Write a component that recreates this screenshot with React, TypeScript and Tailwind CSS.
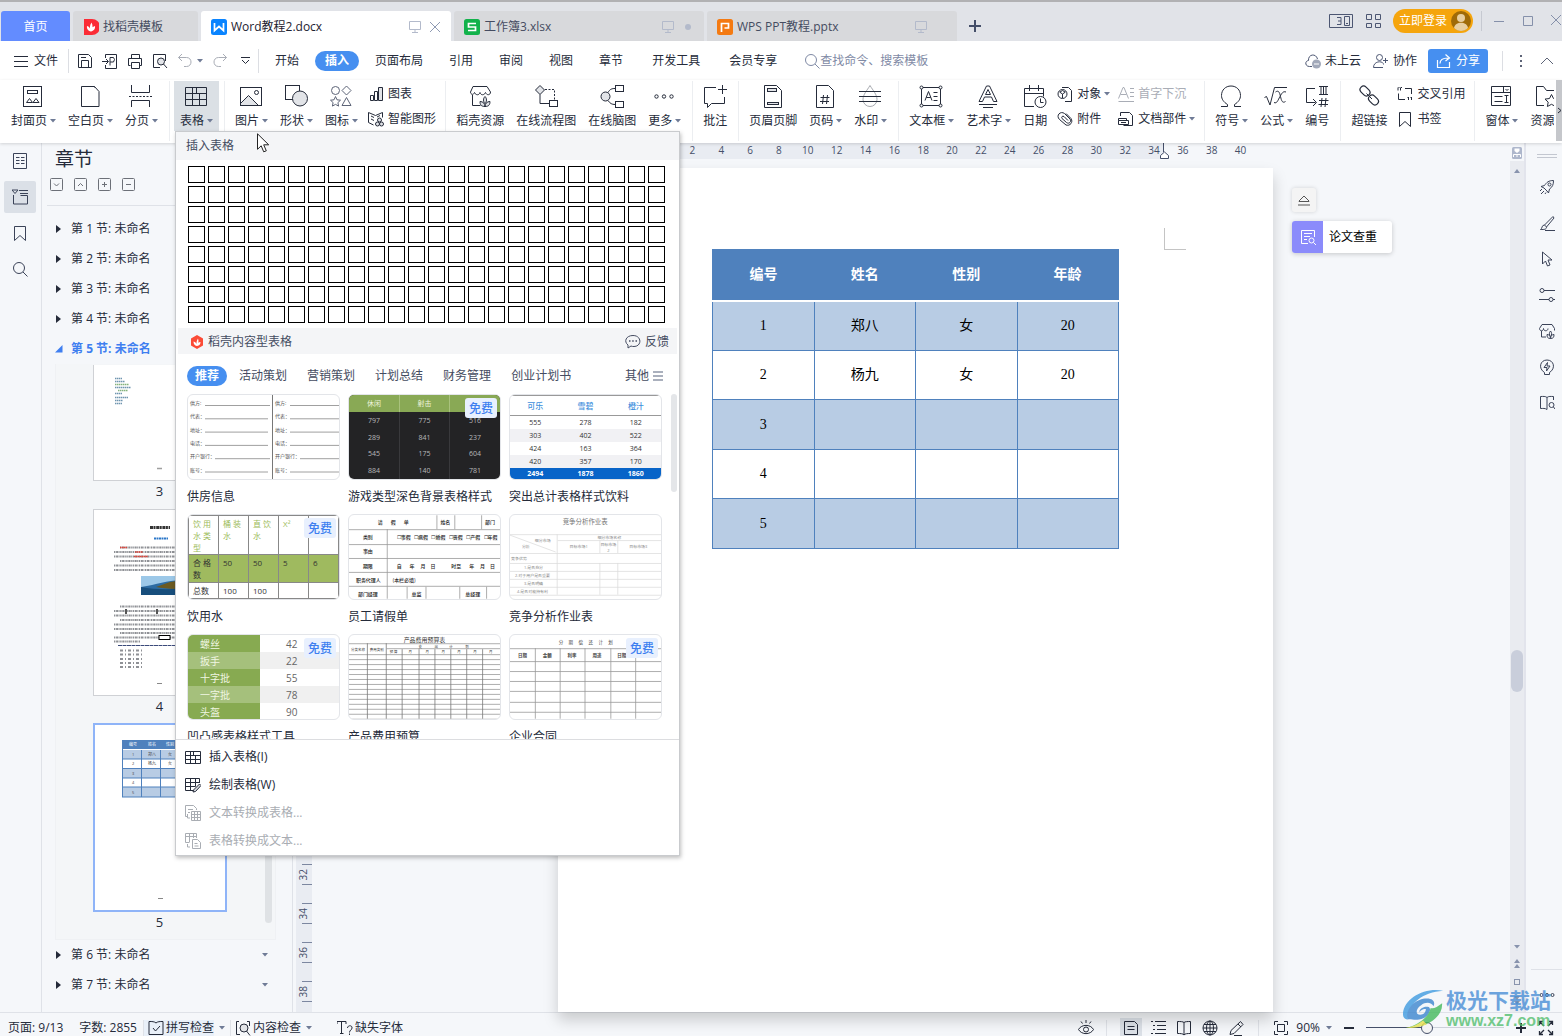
import React from "react";

type Kids = { children?: React.ReactNode };

function Svg({ s = 16, w, h, c = "", sw = 1, children }: Kids & { s?: number; w?: number; h?: number; c?: string; sw?: number }) {
  const W = w ?? s;
  const H = h ?? s;
  return (
    <svg width={W} height={H} viewBox={`0 0 ${W} ${H}`} fill="none" stroke="currentColor" strokeWidth={sw} className={`shrink-0 ${c}`} aria-hidden="true">
      {children}
    </svg>
  );
}

const Caret = ({ c = "text-[#6f7b96]" }: { c?: string }) => (
  <Svg w={6} h={4} c={c}>
    <path d="M0 0h6L3 3.5z" fill="currentColor" stroke="none" />
  </Svg>
);

/* ---------- ribbon icons, 24 x 24 ---------- */
const big: Record<string, React.ReactNode> = {
  cover: <><rect x="2.5" y="2.5" width="18" height="20" /><rect x="6.5" y="6.5" width="10" height="3" /><path d="M5.5 18.500l3-4 3 4zM12 18.500l3-4 3 4z" /></>,
  blank: <path d="M3.500 2.500h13l4.500 5v15H3.500zM16.500 2.500v1" />,
  brk: <><path d="M2.500 1v7.500h18V1M2.500 23v-6.500h18V23" /><path d="M0 12.500h23" strokeDasharray="2 1.500" /></>,
  table: <path d="M1.500 3.500h21v18h-21zM1.500 9.500h21M1.500 15.500h21M8.500 3.500v18M15.500 9.500v12M12.500 3.500v6" />,
  picture: <><path d="M1.500 19.500l8-8 10 10H1.500z" fill="#e2e4e8" /><rect x="1.500" y="3.500" width="21" height="18" /><circle cx="17.500" cy="8.500" r="2" /></>,
  shape: <><rect x="1.500" y="1.500" width="14" height="14" /><circle cx="16" cy="14.500" r="7.500" fill="#e2e4e8" /></>,
  glyphs: <g stroke="#5d6477"><circle cx="6.500" cy="6.500" r="4" /><path d="M17.500 2l4.500 4.500-4.500 4.500L13 6.500zM6.500 12.500l1.500 3.300 3.500.4-2.600 2.400.7 3.500-3.100-1.700-3.100 1.700.7-3.500L1.500 16.200l3.500-.4zM17.500 13.500l4.500 8h-9z" /></g>,
  shop: <><path d="M4.500 11v10.500h8M5 2.500h14l3.500 5.500c0 3.500-4 3.500-5 .5-1.500 3-4.500 3-5.500 0-1 3-4 3-5.500 0-1 3-4 2-4-.5z" /><path d="M17 22.500c-4 0-5-2-5-5 3 0 5 2 5 5zm0 0c4 0 5-2 5-5-3 0-5 2-5 5zm0-3c-2-2-2-5 0-7 2 2 2 5 0 7z" fill="#e2e4e8" /></>,
  flow: <><path d="M6 1.500l4.500 4.500L6 10.500 1.500 6z" fill="#e2e4e8" /><path d="M6 10.500v9h9" /><path d="M11 5.500h9.500v11" strokeDasharray="2 1.500" /><rect x="15.500" y="16.500" width="8" height="6" /></>,
  mind: <><circle cx="5.500" cy="12.500" r="4.500" fill="#e2e4e8" /><path d="M8 8.500c2-3.500 4-4 7-4M8 16.500c2 3 4 4 7 4" /><rect x="15.500" y="1.500" width="8" height="6" /><rect x="15.500" y="17.500" width="8" height="6" /></>,
  more: <><circle cx="4.500" cy="12.500" r="1.700" /><circle cx="12" cy="12.500" r="1.700" /><circle cx="19.500" cy="12.500" r="1.700" /></>,
  comment: <path d="M13 3.500H1.500v16h3v4l4-4h13V13M19.500 1v9M15 5.500h9" />,
  header: <><path d="M3.500 1.500h12l5 5v17h-17z" /><rect x="6.500" y="4.500" width="9" height="3" fill="#e2e4e8" /><rect x="6.500" y="18.500" width="11" height="2" fill="#e2e4e8" /></>,
  pageno: <path d="M3.500 1.500h12l5 5v17h-17zM10.500 11l-1 9M14.500 11l-1 9M7.500 13.500h9M7 17.500h9" />,
  water: <><path d="M12 1.500c3 5 7 9 7 14a7 7 0 01-14 0c0-5 4-9 7-14z" stroke="#a5a8ae" /><path d="M1 7.500h22M1 12.500h22M1 17.500h22" /></>,
  textbox: <><rect x="2.500" y="3.500" width="19" height="18" /><path d="M6 16.500l3.500-9 3.500 9M7.300 13.500h4.400M14.500 8.500h4M14.500 12.500h4M14.500 16.500h4" /><g fill="#fff"><circle cx="2.500" cy="3.500" r="1.500" /><circle cx="21.500" cy="3.500" r="1.500" /><circle cx="2.500" cy="21.500" r="1.500" /><circle cx="21.500" cy="21.500" r="1.500" /></g></>,
  art: <><path d="M3 17.500L10.500 2h3L21 17.500h-3.500l-2-4.500h-7l-2 4.500zM9.500 10.500h5L12 5.500zM3 20.500h18M7 23.500h10" /></>,
  date: <><path d="M11 22.500H1.500v-18h19v8M1.500 9.500h19M6.500 1v6M15.500 1v6" /><circle cx="17.500" cy="18" r="5.500" fill="#fff" /><path d="M17.500 14.500v4h3" /></>,
  omega: <path d="M2 22.500h6.500v-2C4.500 18 2.500 15 2.500 11.500 2.500 6 6.500 2 12 2s9.500 4 9.500 9.500c0 3.500-2 6.500-6 9v2H22" />,
  formula: <path d="M.5 13.500l2-1 3.500 8.500L10.500 3.500H23M11.500 8c3-2 4 0 5 4.500s2 7 5 5M22 8c-3-1-4 1-6 4.500S13 20 10 18.500" />,
  number: <path d="M10 4.500H1.500v14h9M8 15l3.500 3.500L8 22M14 2.500h9M14 10.500h9M16 2.500v8M18.500 2.500v8M21 2.500v8M17 14l-1 9M21 14l-1 9M14 16.500h9.500M13.500 20.500H23" />,
  link: <><rect x="2.500" y="3.500" width="11" height="7" rx="3.500" transform="rotate(45 8 7)" strokeWidth="1.200" /><rect x="11" y="12.500" width="11" height="7" rx="3.500" transform="rotate(45 16.500 16)" strokeWidth="1.200" /><path d="M9.500 9.500l5.500 5.500" /></>,
  form: <path d="M2.500 2.500h19v19h-19zM2.500 8.500h19M14.500 2.500v6M16.500 5l1.500 1.500L19.500 5M5.500 12.500h8M5.500 17.500h8M17.500 11v8M15.500 11.500h4M15.500 18.500h4" />,
  res: <path d="M10 21.500H2.500v-19h7l3 4h9v4M17.500 10.500l2 4 4.500.6-3.200 3 .8 4.400-4.100-2.200-4.100 2.200.8-4.400-3.200-3 4.500-.6z" />,
};

/* ---------- small icons, 16 x 16 ---------- */
const sm: Record<string, React.ReactNode> = {
  chart: <><path d="M2.500 9.500h3v5h-3zM6.500 5.500h3v9h-3z" /><path d="M10.500 1.500h4v13h-4z" fill="#e2e4e8" /></>,
  smart: <><path d="M.5 1.500l7 3 7-3v5M.5 1.500v10l5 2.500M3 5l3 1.500M3 8l3 1.500M12 4.500L9 6" /><circle cx="11.500" cy="9" r="2" fill="#e2e4e8" /><circle cx="9.500" cy="13" r="2" fill="#e2e4e8" /><circle cx="13.500" cy="13" r="2" fill="#e2e4e8" /></>,
  object: <><path d="M5 1.500h6.500l3 3v11H8" /><circle cx="5.500" cy="8" r="4.500" fill="#fff" /><path d="M5.500 8l3-2M5.500 8v4M5.500 8l-3-2M3 6l2.500-1.500L8 6" /></>,
  clip: <path d="M9 2.500l5 5c2.500 3.500-1 8-5 6.500L2.500 8.500c-4-4 1-9 5-6l5.500 5.500c2 2.500-1 5.500-3.500 3.500L5 7.500C4 6 5.500 4.500 7 5.500l4 4" />,
  drop: <path d="M.5 12.500L5 1.500h1l4.500 11M2.500 8.500h6M12 2.500h4M12 6.500h4M12 10.500h4M.5 15.500H16" />,
  parts: <path d="M2.500 5V1.500h9l3 3v10h-9M.5 9.500v-2h8v2M.5 9.500h10v4H.5zM3 11.500h5" />,
  cross: <path d="M1 1.500v3M3.500 1.500v3M1.500 1.500h1M4 1.500h1M8 2.500h6.500V8M1.500 7.500v6H8M11.500 11v3M14.500 11v3M10.500 11.500h1M13.500 11.500h1" />,
  bookmark: <path d="M2.500 1.500h11v14L8 10.500l-5.500 5z" />,
  save: <path d="M1.500 1.500h10l3 3v10h-13zM4.500 14.500v-7h7v7M4 4.500h5" />,
  pdf: <path d="M3.500 5V1.500h11v14h-11V12M0 8.500h6M4 6l2.500 2.500L4 11M8 12.500v-8h3.500l1 2-1 2.500H8" />,
  print: <path d="M4.500 5.500v-4h8v4M3.500 12.500h-2v-7h13v7h-2M4.500 9.500h8v6h-8z" />,
  preview: <><path d="M8 14.500H1.500v-13h12V8" /><circle cx="9" cy="8.500" r="3.500" fill="#e2e4e8" /><path d="M11.500 11l3.500 4" /></>,
  undo: <path d="M5 1L1.500 4.500 5 8M1.500 4.500h8c6 0 6 9 0 9H7" />,
  redo: <path d="M11 1l3.500 3.500L11 8M14.500 4.500h-8c-6 0-6 9 0 9H9" />,
  search: <><circle cx="7" cy="7" r="5.500" /><path d="M11 11l4.500 4.500" /></>,
  cloud: <><path d="M7 13.500H4.500c-4.500 0-5-5.500-1-6C3 1 11 0 12.500 6" /><circle cx="11.500" cy="11" r="4.500" fill="#a2a9ba" stroke="none" /><path d="M9 11h5" stroke="#fff" /></>,
  collab: <><circle cx="6.500" cy="4.500" r="3" /><path d="M10 14.500H.5c0-7 10-7 10-3M10 7.500h5M12.500 5v5" /></>,
  share: <path d="M1.500 7v7.500h12V9M4 10.500c0-4 3-5.500 8-5.500M9.500 1.500L13.500 5 9.500 8" strokeWidth="1.200" />,
  monitor: <path d="M2.500 2.500h11v8h-11zM8 10.500v3M5 13.500h6" />,
  doc: <path d="M1.500 .5h13v15h-13zM4 4.500h3.500M9 4.500h3.500M4 7.500h3.500M9 7.500h3.500M4 10.500h3.500M9 10.500h3.500" />,
  outline: <><path d="M1.500 6v9h14V6.500h-7M7 1.500h9M8 4.500h8M0 1h6L3 4.500z" /></>,
  rocket: <><path d="M14.500 1.500c-5 0-7 2-9 5L2 7.500 5 9l3 3 1.500 2 1-4c3-2 4-4.500 4-8.500zM1 12l2-2M2 15l3-3M6 15l1-1.500" /><circle cx="10.500" cy="5.500" r="1.500" /></>,
  brush: <path d="M14 1.500L5.500 10l2 2L15 3zM5.500 10c-3 0-2 3.500-4 4.500 4 0 6 0 6-2.500M6 15.500h10" />,
  pointer: <path d="M3.500 1v12l3-3 2 5 2.500-1-2-5H13z" />,
  sliders: <><circle cx="3" cy="3.500" r="2" /><path d="M5 3.500h11M0 12.500h10M14 12.500h2" /><circle cx="12" cy="12.500" r="2" /></>,
  shop: <><path d="M2.500 8v6H7M3 1.500h10l2.500 4v2M3 1.500l-2.500 4c0 3 4 3 4 0 0 3 4.500 3 4.500 0" /><path d="M11.500 15.500c-3 0-3.500-1.500-3.500-4 2 0 3.500 1.500 3.500 4zm0 0c3 0 3.500-1.500 3.500-4-2 0-3.500 1.500-3.500 4zm0-2c-1.500-1.500-1.500-4 0-5.500 1.500 1.500 1.500 4 0 5.500z" /></>,
  bulb: <path d="M5.500 13.500C-1 9.500 1 1 8 1s9 8.500 2.500 12.500v2h-5zM8.500 3.500L5 8.500h3l-.5 3.500 3.500-5H8z" />,
  book: <><path d="M8 14.500c-2-1.500-4-1-6.500-1v-12c2.500 0 5-.500 6.500 1v12zM8 2.500c1.500-1.500 4-1 6.500-1V5" /><circle cx="12.500" cy="10" r="2.500" /><path d="M14.500 12l1.500 2" /></>,
  spell: <path d="M8 3c-1.500-1.500-4-1.500-7-1.500v13h14v-13C12 1.500 9.500 1.500 8 3zM5 8l2.500 3L12 6" />,
  check: <><path d="M4 1.500H1.500v13H5M12 1.500h2.500V6" /><circle cx="9" cy="8" r="4" fill="#e2e4e8" /><path d="M11.500 11l3.500 4.500" /></>,
  font: <path d="M0 4V1.500h9V4M4.500 1.500v12M3 13.500h3.500M10.500 8c0-3 5-3 4.500 0 0 2-2.500 2-2.500 4.500M12.500 13.500v1.500" />,
  eye: <><path d="M.5 9.500C3.500 4 12.500 4 15.500 9.500c-3 5.500-12 5.500-15 0zM8 0v3M3 1.500l1.500 2M13 1.500l-1.500 2" /><circle cx="8" cy="9.500" r="2.500" /></>,
  page: <path d="M1.500 1.500h10l3 3v10h-13zM4.500 6.500h7M4.500 9.500h7" />,
  list: <path d="M1 1.500h2M5 1.500h11M3 5.500h2M7 5.500h9M3 9.500h2M7 9.500h9M1 13.500h2M5 13.500h11" />,
  open: <path d="M1.500 1.500c3 0 5.500 0 6.500 1 1-1 3.500-1 6.500-1v12c-3 0-5.500 0-6.500 1.500-1-1.500-3.500-1.500-6.500-1.500zM8 2.500V15" />,
  globe: <><circle cx="8" cy="8" r="7" /><ellipse cx="8" cy="8" rx="3.500" ry="7" /><path d="M1 8h14M2 4.500h12M2 11.500h12M8 1v14" /></>,
  pen: <path d="M12.500 1.500l2.500 3-9 9-4 1 1-4zM10 4l3 3M6 15.500h8" />,
  fit: <path d="M1.500 5V1.500H5M11 1.500h3.500V5M14.500 11v3.500H11M5 14.500H1.500V11M4.500 4.500h7v7h-7z" />,
  full: <path d="M10 6l4-4M11 1.500h3.500V5M6 6L2 2M1.500 5V1.500H5M6 10l-4 4M1.500 11v3.500H5M10 10l4 4M11 14.500h3.500V11" strokeWidth="1.300" />,
  tins: <path d="M.5 2.500h15v12H.5zM.5 6.500h15M.5 10.500h15M5.500 2.500v12M10.500 6.500v8M8.500 2.500v4" />,
  tdraw: <><path d="M8 13.500H.5v-12h14V6M.5 5.500h14M.5 9.500h10M5.500 1.500v12M10.500 1.500v8" /><path d="M14.500 7l1.500 1.500-5.500 6-2.500.5.500-2z" fill="#d6d9df" /></>,
  t2t: <path d="M3 11.500H.5V.5h8l3 3V5M3 4.500h5M3 7.500h2M2.500 9v4H5M6.500 6.500h9v9h-9zM6.500 9.500h9M6.500 12.500h9M9.500 6.500v9M12.500 6.500v9" />,
  t2x: <path d="M4 9.500H.5v-9h11V5M.5 3.500h11M4.500.5v9M8.500.5V5M2.500 11v3H5M7.500 6.500h5l3 3v6h-8zM9.500 10.500h3M9.500 13h4" />,
  chat: <><path d="M8 1.500c9 0 9 11 1 11-1 0-2 0-3-.500L3 14v-3C-1.500 7.500 1 1.500 8 1.500z" /><path d="M4 7h1.500M7.200 7h1.500M10.500 7H12" strokeWidth="1.500" /></>,
  report: <><path d="M8 14.500H1.500v-13h13V8M4 4.500h8M4 7.500h6M4 10.500h3" /><circle cx="11.500" cy="11.500" r="2.500" /><path d="M13.500 13.500L16 16" /></>,
};

const S = ({ n, c = "" }: { n: string; c?: string }) => <Svg c={c}>{sm[n]}</Svg>;

/* ---------- title bar ---------- */
function Logo({ kind }: { kind: "w" | "s" | "p" }) {
  const bg = kind === "w" ? "#0a84ff" : kind === "s" ? "#12b24b" : "#f47a12";
  const d = kind === "w" ? "M3.500 4v7.500L8 7.500l4.500 4V4" : kind === "s" ? "M12 4.500H4.500v3.500h7v3.500H4" : "M4.500 13V4.500h7v4.500h-4";
  return (
    <Svg>
      <rect width="16" height="16" rx="2.500" fill={bg} stroke="none" />
      <path d={d} stroke="#fff" strokeWidth="1.700" />
    </Svg>
  );
}

function FileTab({ kind, name, active, end }: { kind: "w" | "s" | "p"; name: string; active?: boolean; end?: React.ReactNode }) {
  return (
    <div className={`flex h-[30px] w-[250px] items-center rounded-t-[3px] pt-0.5 pr-1.5 pl-2.5 ${active ? "bg-white text-[#1d2230]" : "bg-[#d8d9dc] text-[#454c61]"}`}>
      <Logo kind={kind} />
      <button className="ml-1 flex-1 text-left">{name}</button>
      <S n="monitor" c="text-[#b3bacb]" />
      <span className="ml-0.5 flex w-5 justify-center">{end}</span>
    </div>
  );
}

function TitleBar() {
  return (
    <header className="flex h-[41px] shrink-0 items-end border-t-2 border-[#b1b1b3] bg-[#e1e3e8] pl-px">
      <button className="h-[30px] w-[69px] rounded-t-[3px] bg-[#638cff] pt-0.5 text-white">首页</button>
      <div className="ml-[3px] flex h-[30px] w-[125px] items-center gap-1 rounded-t-[3px] bg-[#d8d9dc] pt-0.5 pl-2.5 text-[#454c61]">
        <Svg>
          <path d="M1 0h8a7 7 0 010 16H1z" fill="#fb2c36" stroke="none" />
          <path d="M8 12.500C5 12 3.500 9.500 4 7c2 .5 3.500 2 4 5.500zm0 0c-1.500-3-1.500-6 .5-9 1.500 3 1.500 6-.5 9zm0 0c0-3 1.500-5 4-5.500.5 3-1.500 5-4 5.500z" fill="#fff" stroke="none" />
        </Svg>
        <button>找稻壳模板</button>
      </div>
      <div className="ml-[3px] flex gap-[3px]">
        <FileTab kind="w" name="Word教程2.docx" active end={<Svg s={12} c="text-[#8f9ab3]"><path d="M1 1l10 10M11 1L1 11" /></Svg>} />
        <FileTab kind="s" name="工作簿3.xlsx" end={<span className="size-1.5 rounded-full bg-[#b3bacb]" />} />
        <FileTab kind="p" name="WPS PPT教程.pptx" />
      </div>
      <button aria-label="新建" className="mb-[9px] ml-3 text-[#454f69]">
        <Svg s={12} sw={2}><path d="M6 0v12M0 6h12" /></Svg>
      </button>
      <div className="mb-2 ml-auto flex items-center text-[#4c5672]">
        <Svg w={24} h={16}>
          <path d="M.5 1.500h23v13H.5zM15.500 3.500h5v9h-5zM17 10.500h2M8 4.500h4v7H8M9 8h3" />
        </Svg>
        <Svg c="ml-3"><path d="M1.500 1.500h5v5h-5zM10.500 1.500h5v5h-5zM1.500 10.500h5v4h-5zM10.500 10.500h5v4h-5z" /></Svg>
        <button className="ml-3 flex h-6 items-center gap-1 rounded-full bg-[#f5a50d] pr-0.5 pl-1.5 text-white">
          立即登录
          <svg width="20" height="20" viewBox="0 0 20 20" aria-hidden="true">
            <circle cx="10" cy="10" r="10" fill="#a06b08" />
            <circle cx="10" cy="7" r="4" fill="#e8cfa0" />
            <path d="M3 17c1-7 13-7 14 0-4 4-10 4-14 0z" fill="#e8cfa0" />
          </svg>
        </button>
        <span className="mr-2.5 ml-2 h-5 w-px bg-[#c6c9d1]" />
        <span className="flex gap-[15px] text-[#8590aa]">
          <Svg s={14}><path d="M2 7.500h10" /></Svg>
          <Svg s={14}><path d="M2.500 2.500h9v9h-9z" /></Svg>
          <Svg s={12}><path d="M1 1l10 10M11 1L1 11" /></Svg>
        </span>
      </div>
    </header>
  );
}

/* ---------- menu bar ---------- */
function MenuBar() {
  const tab = "px-[13px]";
  return (
    <nav className="flex h-[39px] shrink-0 items-center bg-white pl-3.5">
      <button className="flex items-center gap-1.5">
        <Svg w={14} h={14}><path d="M0 2.500h14M0 7.500h14M0 12.500h14" /></Svg>文件
      </button>
      <span className="mr-2 ml-2.5 h-6 w-px bg-[#dcdee3]" />
      <div className="flex items-center gap-[9px]">
        {["save", "pdf", "print", "preview"].map((n) => <button key={n} aria-label={n}><S n={n} /></button>)}
        <button aria-label="撤销" className="flex items-center gap-1 text-[#a9adb6]"><S n="undo" /><Caret /></button>
        <button aria-label="恢复" className="text-[#a9adb6]"><S n="redo" /></button>
        <button aria-label="自定义" className="ml-1"><Svg w={9} h={8}><path d="M0 .5h9M1 3l3.500 3.500L8 3" /></Svg></button>
      </div>
      <span className="mr-[3px] ml-2 h-6 w-px bg-[#dcdee3]" />
      <button className={tab}>开始</button>
      <button className="mx-[3px] h-5 rounded-full bg-[#468ff0] px-2.5 font-bold text-white">插入</button>
      <button className={tab}>页面布局</button>
      <button className={tab}>引用</button>
      <button className={tab}>审阅</button>
      <button className={tab}>视图</button>
      <button className={tab}>章节</button>
      <button className="px-4">开发工具</button>
      <button className={tab}>会员专享</button>
      <label className="ml-3.5 flex items-center text-[#7f8aa5]">
        <S n="search" />
        <input aria-label="查找命令" placeholder="查找命令、搜索模板" className="w-36 bg-transparent outline-none placeholder:text-[#7f8aa5]" />
      </label>
      <div className="ml-auto flex items-center">
        <button className="flex items-center gap-1"><S n="cloud" c="text-[#4c5672]" />未上云</button>
        <button className="ml-3 flex items-center gap-1"><S n="collab" c="text-[#4c5672]" />协作</button>
        <button className="ml-[11px] flex h-6 w-[60px] items-center justify-center gap-1 rounded-[3px] bg-[#468ff0] text-white"><S n="share" />分享</button>
        <span className="ml-3.5 h-5 w-px bg-[#dcdee3]" />
        <button aria-label="更多" className="ml-[11px] text-[#5d6477]"><Svg w={14} h={16}><path d="M7 2v2M7 7v2M7 12v2" strokeWidth="2" /></Svg></button>
        <button aria-label="收起" className="mr-2 ml-3 text-[#5d6477]"><Svg w={14} h={8}><path d="M1 7l6-6 6 6" /></Svg></button>
      </div>
    </nav>
  );
}

/* ---------- ribbon ---------- */
function Big({ i, t, a, on }: { i: string; t: string; a?: boolean; on?: boolean }) {
  return (
    <button className={`flex h-[50px] shrink-0 flex-col items-center gap-[5px] px-1.5 pt-[3px] ${on ? "bg-[#dbe0e5]" : ""}`}>
      <Svg s={24} c={a ? "mr-0.5" : ""}>{big[i]}</Svg>
      <span className="flex items-center gap-[3px] whitespace-nowrap">{t}{a && <Caret />}</span>
    </button>
  );
}
function Small({ i, t, a, off }: { i: string; t: string; a?: boolean; off?: boolean }) {
  return (
    <button className={`flex h-[25px] items-center gap-1 px-1 pt-px whitespace-nowrap ${off ? "text-[#a9adb6]" : ""}`}>
      <S n={i} />
      <span className="flex items-center gap-[3px]">{t}{a && <Caret />}</span>
    </button>
  );
}
const Sep = () => <span className="mr-1 ml-[5px] h-[60px] w-px shrink-0 bg-[#eceef1]" />;
const Stack = ({ children }: Kids) => <div className="flex shrink-0 flex-col">{children}</div>;

function Ribbon() {
  return (
    <div className="relative z-20 flex h-[63px] shrink-0 items-start bg-white pt-px pl-[5px] shadow-[0_1px_3px_rgba(0,0,0,0.15)]">
      <Big i="cover" t="封面页" a /><Big i="blank" t="空白页" a /><Big i="brk" t="分页" a />
      <Sep />
      <div className="relative shrink-0">
        <Big i="table" t="表格" a on />
        <TableMenu />
      </div>
      <Sep />
      <Big i="picture" t="图片" a /><Big i="shape" t="形状" a /><Big i="glyphs" t="图标" a />
      <Stack><Small i="chart" t="图表" /><Small i="smart" t="智能图形" /></Stack>
      <Sep />
      <Big i="shop" t="稻壳资源" /><Big i="flow" t="在线流程图" /><Big i="mind" t="在线脑图" /><Big i="more" t="更多" a />
      <Sep />
      <Big i="comment" t="批注" />
      <Sep />
      <Big i="header" t="页眉页脚" /><Big i="pageno" t="页码" a /><Big i="water" t="水印" a />
      <Sep />
      <Big i="textbox" t="文本框" a /><Big i="art" t="艺术字" a /><Big i="date" t="日期" />
      <Stack><Small i="object" t="对象" a /><Small i="clip" t="附件" /></Stack>
      <Stack><Small i="drop" t="首字下沉" off /><Small i="parts" t="文档部件" a /></Stack>
      <Sep />
      <Big i="omega" t="符号" a /><Big i="formula" t="公式" a /><Big i="number" t="编号" />
      <Sep />
      <Big i="link" t="超链接" />
      <Stack><Small i="cross" t="交叉引用" /><Small i="bookmark" t="书签" /></Stack>
      <Sep />
      <Big i="form" t="窗体" a /><Big i="res" t="资源" a />
      <button aria-label="向右滚动" className="absolute top-0 right-0 flex h-[61px] w-2 items-center justify-center border-l-2 border-white bg-[#c5c7cb]">
        <Svg w={5} h={7}><path d="M1 1l3 2.500L1 6" /></Svg>
      </button>
    </div>
  );
}

/* ---------- template previews ---------- */
function FormLines() {
  const rows: [string, number][] = [["供方:", 17], ["代表：", 17], ["地址：", 17], ["电话：", 17], ["开户银行：", 27], ["账号：", 17]];
  return (
    <svg viewBox="0 0 151 84" className="size-full" fontSize="5" fill="#555" stroke="none">
      {rows.map(([t, x], i) => (
        <g key={t}>
          <text x="2" y={10 + i * 13.300}>{t}</text>
          <text x="87" y={10 + i * 13.300}>{t}</text>
          <path d={`M${x} ${10.500 + i * 13.300}H${i === 0 || i === 4 ? 82 : 80}M${x + 85} ${10.500 + i * 13.300}H151`} stroke="#888" strokeWidth=".8" />
        </g>
      ))}
      <path d="M84.500 0v84" stroke="#777" />
    </svg>
  );
}
function DarkTable() {
  const rows = [["797", "775", "516"], ["289", "841", "237"], ["545", "175", "604"], ["884", "140", "781"]];
  return (
    <table className="size-full table-fixed border-collapse bg-[#232325] text-center text-[7px] leading-none text-[#b9b9bb]">
      <thead><tr className="h-[17px] bg-[#89a955] text-[#eef4de]"><th className="font-normal">休闲</th><th className="border-x border-[#a9c27d] font-normal">射击</th><th className="font-normal">网游</th></tr></thead>
      <tbody>{rows.map((r) => <tr key={r[0]}><td>{r[0]}</td><td className="border-x border-[#39393c]">{r[1]}</td><td>{r[2]}</td></tr>)}</tbody>
    </table>
  );
}
function DrinkTable() {
  const rows = [["555", "278", "182"], ["303", "402", "522"], ["424", "163", "364"], ["420", "357", "170"]];
  return (
    <table className="size-full table-fixed border-collapse border-t border-[#999] text-center text-[7px] leading-none text-[#333]">
      <thead><tr className="h-5 border-b border-[#999] text-[8px] text-[#3e8fdc]"><th className="p-0 font-medium">可乐</th><th className="p-0 font-medium">雪碧</th><th className="p-0 font-medium">橙汁</th></tr></thead>
      <tbody>{rows.map((r, i) => <tr key={r[0]} className={i % 2 ? "h-[13px] bg-[#f1f1f4]" : "h-[13px]"}>{r.map((c) => <td key={c} className="p-0">{c}</td>)}</tr>)}</tbody>
      <tfoot><tr className="h-3 bg-[#0864c8] font-bold text-white"><td className="p-0">2494</td><td className="p-0">1878</td><td className="p-0">1860</td></tr></tfoot>
    </table>
  );
}
function WaterTable() {
  const cell = "border border-[#888] px-1 pt-0.5 align-top";
  return (
    <table className="size-full table-fixed border-collapse text-[8px] leading-[12px] text-[#333]">
      <tbody>
        <tr className="h-[37px] text-[#9cbb5a]"><td className={cell}>饮 用 水 类 型</td><td className={cell}>桶 装水</td><td className={cell}>直 饮水</td><td className={cell}>X²</td><td className={cell} /></tr>
        <tr className="h-[28px] bg-[#9fba5f]"><td className={cell}>合 格 数</td><td className={cell}>50</td><td className={cell}>50</td><td className={cell}>5</td><td className={cell}>6</td></tr>
        <tr><td className={cell}>总数</td><td className={cell}>100</td><td className={cell}>100</td><td className={cell} /><td className={cell} /></tr>
      </tbody>
    </table>
  );
}
function LeaveForm() {
  return (
    <svg viewBox="0 0 152 84" className="size-full" fontSize="5" fill="#222" stroke="none" fontWeight="500">
      <path d="M0 14.500h152M0 29.500h152M0 43.500h152M0 57.500h152M0 71.500h152M38.500 14v70M88.500 0v14M106.500 0v14M133.500 0v14M58.500 72v12M77.500 72v12M111.500 72v12M138.500 72v12" stroke="#999" strokeWidth=".8" />
      <text x="29" y="9">请</text><text x="42" y="9">假</text><text x="55" y="9">单</text><text x="92" y="9">姓名</text><text x="137" y="9">部门</text>
      <text x="14" y="24">类别</text>
      {["事", "病", "婚", "丧", "产", "年"].map((k, i) => <text key={k} x={48 + i * 17.500} y="24">☐{k}假</text>)}
      <text x="14" y="38">事由</text><text x="14" y="53">期限</text>
      <text x="48" y="53">自</text><text x="61" y="53">年</text><text x="72" y="53">月</text><text x="82" y="53">日</text><text x="103" y="53">时至</text><text x="121" y="53">年</text><text x="132" y="53">月</text><text x="142" y="53">日</text>
      <text x="7" y="67">职务代理人</text><text x="44" y="67">(本栏必填)</text>
      <text x="9" y="81">部门经理</text><text x="63" y="81">总监</text><text x="117" y="81">总经理</text>
    </svg>
  );
}
function RivalForm() {
  return (
    <svg viewBox="0 0 152 84" className="size-full" fontSize="4" fill="#888" stroke="none">
      <text x="53" y="9" fontSize="6.500" fill="#777">竞争分析作业表</text>
      <path d="M0 19.500h152M48 25.500h104M0 38.500h152M0 48.500h152M0 56.500h152M0 64.500h152M0 72.500h152M0 80.500h152M47.500 19v61M90.500 25v13M108.500 25v13M90.500 48v32M108.500 48v32M0 20l46 17" stroke="#ddd" strokeWidth=".8" />
      <text x="88" y="24">细分市场名称</text><text x="25" y="27">细分市场</text><text x="12" y="33">分析</text>
      <text x="60" y="33">目标市场1</text><text x="91" y="31">目标市场</text><text x="98" y="37">2</text><text x="120" y="33">目标市场3</text>
      <text x="1" y="45">竞争优势</text><text x="14" y="54">1.是否充分</text><text x="5" y="62">2.对于用户是否重要</text><text x="14" y="70">3.是否明确</text><text x="7" y="78">4.是否对能持有利</text>
    </svg>
  );
}
function ToolTable() {
  const rows = [["螺丝", "42"], ["扳手", "22"], ["十字批", "55"], ["一字批", "78"], ["头盔", "90"]];
  return (
    <table className="size-full table-fixed border-collapse text-[10px] leading-none text-[#666]">
      <tbody>{rows.map(([a, b], i) => (
        <tr key={a} className="h-[17px]">
          <th className={`w-[72px] pl-3 text-left font-normal text-[#f0f6e2] ${i % 2 ? "bg-[#a5c07c]" : "bg-[#87aa51]"}`}>{a}</th>
          <td className={`pl-[26px] ${i % 2 ? "bg-[#f0f0f0]" : ""}`}>{b}</td>
        </tr>))}
      </tbody>
    </table>
  );
}
function BudgetForm() {
  const h = Array.from({ length: 14 }, (_, i) => `M0 ${19.500 + i * 5}h152`).join("");
  return (
    <svg viewBox="0 0 152 84" className="size-full" fontSize="3.500" fill="#333" stroke="none">
      <text x="55" y="6.500" fontSize="6">产品费用预算表</text>
      <path d={`M0 8.500h152M38 13.500h114${h}`} stroke="#999" strokeWidth=".8" />
      <path d="M18.500 8v76M37.500 8v76M53.500 14v70M70.500 14v70M86.500 14v70M102.500 14v70M118.500 14v70M134.500 14v70" stroke="#777" strokeWidth=".8" />
      <text x="2" y="16">分类名称</text><text x="21" y="16">费用类别</text>
      <text x="70" y="12.500">支</text><text x="86" y="12.500">出</text><text x="101" y="12.500">计</text><text x="117" y="12.500">划</text><text x="41" y="18">预 算</text>
      {[60, 77, 93, 109, 125, 141].map((x) => <text key={x} x={x} y="18">月</text>)}
    </svg>
  );
}
function RepayForm() {
  return (
    <svg viewBox="0 0 152 84" className="size-full" fontSize="4.500" fill="#444" stroke="none">
      {"分期偿还计划".split("").map((c, i) => <text key={c} x={49 + i * 10} y="9">{c}</text>)}
      <path d="M0 13.500h152M0 26.500h152M0 36.500h152M0 46.500h152M0 56.500h152M0 67.500h152M0 77.500h152M25.500 13v71M50.500 13v71M75.500 13v71M101.500 13v71M126.500 13v71" stroke="#999" strokeWidth=".8" />
      {["日期", "金额", "利率", "用途", "日期"].map((c, i) => <text key={i} x={8 + i * 25} y="22" fontWeight="700">{c}</text>)}
    </svg>
  );
}

const cards: [string, React.ReactNode, boolean][] = [
  ["供房信息", <FormLines />, false],
  ["游戏类型深色背景表格样式", <DarkTable />, true],
  ["突出总计表格样式饮料", <DrinkTable />, false],
  ["饮用水", <WaterTable />, true],
  ["员工请假单", <LeaveForm />, false],
  ["竞争分析作业表", <RivalForm />, false],
  ["凹凸感表格样式工具", <ToolTable />, true],
  ["产品费用预算", <BudgetForm />, false],
  ["企业合同", <RepayForm />, true],
];

function TableMenu() {
  const items: [string, string, boolean][] = [["tins", "插入表格(I)", false], ["tdraw", "绘制表格(W)", false], ["t2t", "文本转换成表格...", true], ["t2x", "表格转换成文本...", true]];
  return (
    <div className="absolute top-full left-px w-[505px] border border-[#c9cbce] bg-white shadow-[1px_2px_4px_rgba(0,0,0,0.25)]">
      <h2 className="flex h-7 items-center bg-[#f4f5f7] pl-2.5 text-[#454c61]">插入表格</h2>
      <svg width="12" height="20" viewBox="0 0 12 20" className="pointer-events-none absolute top-px left-[81px]" aria-hidden="true">
        <path d="M.5.8v15.500l3.700-3.500 2.500 6 2.600-1-2.600-6h5z" fill="#fff" stroke="#222" />
      </svg>
      <div className="grid w-[489px] grid-cols-24 gap-[3px] pt-1.5 pb-[5px] pl-3">
        {Array.from({ length: 192 }, (_, i) => (
          <button key={i} aria-label={`${Math.floor(i / 24) + 1} × ${(i % 24) + 1}`} className="h-[17px] border border-black" />
        ))}
      </div>
      <div className="mx-0.5 flex h-[26px] items-center bg-[#f4f5f7] pt-px pr-2 pl-3 text-[#454c61]">
        <Svg w={14} h={14}>
          <path d="M7 0l6 3.500v7L7 14l-6-3.500v-7z" fill="#fb4b36" stroke="none" />
          <path d="M7 11C4.500 10.500 3.500 9 3.500 6.500 5.500 7 6.500 8 7 11c-1-3-.5-5 1-7.500 1 2.500.5 5-1 7.500.5-2.500 1.500-4 3.500-4 0 2.500-1 3.500-3.500 4z" fill="#fff" stroke="none" />
        </Svg>
        <span className="ml-1 flex-1">稻壳内容型表格</span>
        <button className="flex items-center gap-1"><S n="chat" />反馈</button>
      </div>
      <div className="mt-3 flex h-5 items-center gap-5 pr-4 pl-[11px] text-[#454c61]">
        <button className="-mr-2 h-5 rounded-full bg-[#468ff0] px-2 font-bold text-white">推荐</button>
        {["活动策划", "营销策划", "计划总结", "财务管理", "创业计划书"].map((t) => <button key={t}>{t}</button>)}
        <button className="ml-auto flex items-center gap-1">其他<Svg w={10} h={10} c="text-[#8f96a8]"><path d="M0 1h10M0 5h10M0 9h10" strokeWidth="1.300" /></Svg></button>
      </div>
      <div className="relative mt-1 h-[349px] overflow-hidden pt-1 pl-[11px]">
        <div className="grid w-[475px] grid-cols-3 gap-x-2">
          {cards.map(([t, pic, free]) => (
            <figure key={t} className="relative h-[120px]">
              <div className="h-[86px] overflow-hidden rounded-md border border-[#e3e5e9]">{pic}</div>
              {free && <span className="absolute top-1 right-1 rounded-[3px] bg-[#e8f0fe] px-1 pt-[3px] pb-px font-medium text-[#3d7ff0]">免费</span>}
              <figcaption className="mt-[9px] whitespace-nowrap">{t}</figcaption>
            </figure>
          ))}
        </div>
        <span className="absolute top-1 right-0.5 h-[98px] w-1.5 rounded-full bg-[#e4e6e9]" />
      </div>
      <div className="flex flex-col border-t border-[#dcdde0] pt-[3px]">
        {items.map(([i, t, off]) => (
          <button key={t} disabled={off} className={`flex h-7 items-center gap-2 pl-[9px] ${off ? "text-[#a9adb3]" : ""}`}>
            <S n={i} />{t}
          </button>
        ))}
      </div>
    </div>
  );
}

/* ---------- left side ---------- */
function LeftRail() {
  return (
    <div className="flex w-[42px] shrink-0 flex-col gap-1 border-r border-[#dfe2e8] pt-0.5 pl-1 text-[#3b4358]">
      {["doc", "outline", "bookmark", "search"].map((n) => (
        <button key={n} aria-label={n} className={`flex size-8 items-center justify-center ${n === "outline" ? "rounded-xs bg-[#dbe0e7]" : ""}`}><S n={n} /></button>
      ))}
    </div>
  );
}

function Section({ n, open }: { n: number; open?: boolean }) {
  return (
    <button className={`flex h-[30px] w-full items-center pr-6 pl-[13px] ${open ? "font-bold text-[#3f7ff0]" : ""}`}>
      <Svg s={8} c="mr-2">{open ? <path d="M7.500 0v7.500H0z" fill="currentColor" stroke="none" /> : <path d="M1 0l5 4-5 4z" fill="currentColor" stroke="none" />}</Svg>
      <span className="flex-1 text-left">第 {n} 节: 未命名</span>
      <Caret />
    </button>
  );
}

function TextPage() {
  const line = (y: number, x = 20) => `M${x} ${y}H112`;
  const body = [[37.500, 26], [42, 20], [46.500, 20], [51, 26], [55.500, 20], [60, 20], [96.500, 26], [101, 20], [105.500, 20], [110, 26], [114.500, 20], [119, 20], [123, 26], [127.500, 20]];
  return (
    <svg viewBox="0 0 131 185" className="size-full" fill="none">
      <path d="M56 17.500h20" stroke="#333" strokeWidth="3" strokeDasharray="3 .5 2 .7" />
      <path d="M60 28.500h14" stroke="#2c78c9" strokeWidth="2" strokeDasharray="2 .5" />
      <g stroke="#6a6d73" strokeWidth="2" strokeDasharray="1.400 .7 2.200 .5 .8 .6" opacity=".75">
        <path d={body.map(([y, x]) => line(y, x)).join("")} />
        <path d="M20 131.500h26" />
        <path d="M26 140.500h22M26 144.500h22M26 149h22M26 153h22M26 157h22" strokeDasharray="3 2 1 2" />
      </g>
      <path d="M24 135.500h88" stroke="#3b4a7a" strokeDasharray="4 .5" />
      <path d="M26 37.500h7M41 42h8M40 46.500h14" stroke="#e0443a" strokeWidth="1.500" strokeDasharray="1.500 .5" />
      <rect x="47" y="66" width="50" height="19" fill="#2d6ca3" />
      <path d="M47 66h50v5c-20-3-30 3-50 6z" fill="#9cc8e8" />
      <path d="M62 77l14-5 21-3v8c-10 3-25 2-35 0z" fill="#6b5a22" />
      <path d="M47 77c15 3 35 3 50 0v8H47z" fill="#174e7c" />
      <path d="M32 99v5M63 99v5" stroke="#555" strokeWidth="2" />
      <rect x="65" y="125.500" width="11" height="4" fill="#fff" stroke="#000" />
      <path d="M63 173.500h5" stroke="#888" />
    </svg>
  );
}

function SectionPanel() {
  const boxes = ["M4 5.500l2.500 2.500L9 5.500", "M4 8l2.500-2.500L9 8", "M4 6.500h5M6.500 4v5", "M4 6.500h5"];
  return (
    <aside className="flex w-[251px] shrink-0 flex-col border-r border-[#dfe2e8]">
      <h1 className="mt-1 pl-[13px] text-[19px] leading-6">章节</h1>
      <div className="mt-[7px] flex gap-[11px] pl-2 text-[#6c7078]">
        {boxes.map((d) => <button key={d}><Svg s={13}><rect x=".5" y=".5" width="12" height="12" rx="1" /><path d={d} /></Svg></button>)}
      </div>
      <div className="mt-3.5 mr-4 ml-[5px] border-t border-[#dfe2e8] pt-2" />
      {[1, 2, 3, 4].map((n) => <Section key={n} n={n} />)}
      <Section n={5} open />
      <div className="relative mr-4 ml-[13px] flex flex-col border border-t-0 border-[#eff1f4] bg-[#f4f6f8] pt-px pb-[7px] pl-[37px] text-[13px]">
        <div className="h-[116px] w-[133px] border border-t-0 border-[#cfd1d5] bg-white">
          <svg viewBox="0 0 131 115" className="size-full" fill="none" strokeWidth="1.500" strokeDasharray="1.500 .5" opacity=".8">
            <path d="M21 13.500h7M21 16.500h10M21 22.500h16M21 28.500h7M21 32.500h13M21 35.500h8M21 38.500h7" stroke="#4a7a9c" />
            <path d="M21 19.500h14M24 25.500h10" stroke="#66a05c" />
            <path d="M63 103.500h5" stroke="#888" strokeDasharray="none" />
          </svg>
        </div>
        <span className="h-[28px] w-[133px] text-center leading-5">3</span>
        <div className="h-[187px] w-[133px] border border-[#cfd1d5] bg-white"><TextPage /></div>
        <span className="h-[27px] w-[133px] text-center leading-5">4</span>
        <div className="h-[189px] w-[134px] border-2 border-[#8fb4f8] bg-white">
          <svg viewBox="0 0 130 185" className="size-full">
            <path d="M27 15h76v9H27z" fill="#4f81bd" />
            <path d="M27 25h76v9H27zM27 43h76v10H27zM27 62h76v10H27z" fill="#b8cce4" />
            <path d="M27.500 15v57M46.500 25v47M65.500 25v47M84.500 25v47M103 15v57M27 34h76M27 43.500h76M27 53h76M27 62h76M27 72h76" stroke="#4f81bd" fill="none" />
            <g fontSize="4" fill="#fff"><text x="34" y="21">编号</text><text x="53" y="21">姓名</text><text x="71" y="21">性别</text><text x="90" y="21">年龄</text></g>
            <g fontSize="4" fill="#444"><text x="37" y="31">1</text><text x="53" y="31">郑八</text><text x="73" y="31">女</text><text x="37" y="40">2</text><text x="53" y="40">杨九</text><text x="73" y="40">女</text><text x="37" y="50">3</text><text x="37" y="59">4</text><text x="37" y="69">5</text></g>
            <path d="M63 173.500h5" stroke="#888" />
          </svg>
        </div>
        <span className="w-[133px] text-center leading-5">5</span>
        <span className="absolute right-[3px] bottom-4 h-40 w-[7px] rounded-full bg-[#dfe2e5]" />
      </div>
      <Section n={6} />
      <Section n={7} />
    </aside>
  );
}

/* ---------- document ---------- */
function DocTable() {
  const rows = [["1", "郑八", "女", "20"], ["2", "杨九", "女", "20"], ["3", "", "", ""], ["4", "", "", ""], ["5", "", "", ""]];
  return (
    <table className="mt-[81px] ml-[154px] w-[407px] table-fixed border-collapse border border-[#4f81bd] text-center font-['Liberation_Serif','Noto_Sans_CJK_SC',serif] text-[14px] leading-4 text-black">
      <thead>
        <tr className="h-[51px] border-b-2 border-b-white bg-[#4f81bd] text-white">
          {["编号", "姓名", "性别", "年龄"].map((h) => <th key={h}>{h}</th>)}
        </tr>
      </thead>
      <tbody>
        {rows.map((r, i) => (
          <tr key={r[0]} className={i % 2 ? "h-[49px] bg-white" : "h-[50px] bg-[#b8cce4]"}>
            {r.map((c, j) => <td key={j} className={i === 0 ? "border-x border-b border-[#4f81bd]" : "border border-[#4f81bd]"}>{c}</td>)}
          </tr>
        ))}
      </tbody>
    </table>
  );
}

function Workspace() {
  return (
    <main className="flex min-w-0 flex-1">
      <div className="ml-[3px] flex w-4 shrink-0 flex-col items-end justify-end gap-[18px] overflow-hidden bg-[#e9ecf2] pb-2.5 text-[10px] text-[#454f69]">
        {[28, 30, 32, 34, 36, 38].map((n) => (
          <span key={n} className="flex h-[21px] w-2.5 shrink-0 items-center justify-center border-y border-[#7c87a0]">
            <span className="mr-2 rotate-180 leading-3 [writing-mode:vertical-rl]">{n}</span>
          </span>
        ))}
      </div>
      <div className="flex min-w-0 flex-1 flex-col">
        <div className="grid h-4 shrink-0 grid-cols-[246fr_715px_237fr] text-[10px] leading-[15px] text-[#454f69]">
          <div className="bg-[#e9ecf2]" />
          <div className="relative bg-[linear-gradient(to_right,#e9ecf2_606px,#f5f7fa_606px)] pl-[120px]">
            <div className="grid w-[577px] grid-cols-20 text-center">
              {Array.from({ length: 20 }, (_, i) => <span key={i}>{(i + 1) * 2}</span>)}
            </div>
            <Svg w={9} h={16} c="absolute top-0 left-[602px]"><path d="M3.500 0v9M.5 15.500v-3l4-3.500 4 3.500v3z" fill="#fff" /></Svg>
          </div>
        </div>
        <div className="mt-[9px] grid min-h-0 flex-1 grid-cols-[246fr_715px_237fr]">
          <span />
          <article className="relative bg-white shadow-[0_8px_14px_rgba(0,0,0,0.18)]">
            <DocTable />
            <span className="absolute top-[60px] left-[606px] size-[22px] border-b border-l border-[#c4c4c4]" />
          </article>
          <div className="flex flex-col items-start gap-[9px] pt-5 pl-[19px]">
            <button aria-label="收起" className="flex size-6 items-center justify-center rounded-[3px] bg-[#f4f4f4] text-[#555] shadow-[0_0_4px_rgba(0,0,0,0.15)]">
              <Svg w={12} h={12}><path d="M1 7L6 2l5 5v.500H1zM0 11h12" /></Svg>
            </button>
            <button className="flex h-8 w-[100px] items-center overflow-hidden rounded-[3px] bg-white text-black shadow-[0_1px_5px_rgba(0,0,0,0.2)]">
              <span className="flex h-8 w-[31px] items-center justify-center bg-[#8b8bfb] text-white"><S n="report" /></span>
              <span className="ml-1.5">论文查重</span>
            </button>
          </div>
        </div>
      </div>
      <div className="flex w-4 shrink-0 flex-col items-center border-r-2 border-[#e2e4ec] bg-[#e9ebf0] text-[#8893ad]">
        <span className="flex h-[18px] w-full justify-center bg-[#f5f7fa] pt-1">
          <Svg w={10} h={12}><rect width="10" height="12" rx="1.500" fill="#aeb7cc" stroke="none" /><path d="M2.500 1.500h5v2.500L5 6 2.500 4z" fill="#fff" stroke="none" /><path d="M1.500 10V7.500h7V10M5 7.500V10" stroke="#fff" /></Svg>
        </span>
        <Svg w={6} h={4} c="mt-2"><path d="M0 4h6L3 0z" fill="currentColor" stroke="none" /></Svg>
        <div className="flex w-full flex-1 flex-col items-center pt-[477px]">
          <span className="h-[42px] w-3 rounded-full bg-[#c9cedb]" />
        </div>
        <Caret c="text-[#8893ad]" />
        <Svg w={8} h={9} c="mt-2.5"><path d="M1 4l3-4 3 4zM1 9l3-4 3 4z" fill="currentColor" stroke="none" /></Svg>
        <Svg w={8} h={8} c="mt-2.5"><rect x="1.500" y="1.500" width="5" height="5" /></Svg>
        <Svg w={8} h={9} c="mt-2.5 mb-[7px]"><path d="M1 0l3 4 3-4zM1 5l3 4 3-4z" fill="currentColor" stroke="none" /></Svg>
      </div>
    </main>
  );
}

function RightRail() {
  return (
    <div className="flex w-9 shrink-0 flex-col pl-[5px] text-[#3b4358]">
      <span className="mx-auto mt-[11px] h-1 w-5 border-y border-[#c3c7d0]" />
      <div className="mt-[13px] flex flex-col items-center gap-1">
        {["rocket", "brush", "pointer", "sliders", "shop", "bulb", "book"].map((n) => (
          <button key={n} aria-label={n} className="flex size-8 items-center justify-center"><S n={n} /></button>
        ))}
      </div>
      <button aria-label="更多" className="mt-auto flex h-[43px] items-center justify-center border-t border-[#dfe2e8] pt-2">
        <Svg w={16} h={6}><circle cx="2.500" cy="3" r="1.500" /><circle cx="8" cy="3" r="1.500" /><circle cx="13.500" cy="3" r="1.500" /></Svg>
      </button>
    </div>
  );
}

/* ---------- status bar ---------- */
function StatusBar() {
  return (
    <footer className="flex h-6 shrink-0 items-center border-t border-[#dfe2e8] bg-[#f5f7fa] pt-1.5 pl-2 whitespace-nowrap">
      <span>页面: 9/13</span>
      <span className="ml-4">字数: 2855</span>
      <button className="ml-1.5 flex items-center gap-0.5 border-l border-[#dfe2e8] bg-[#e9f0f9] pl-1"><S n="spell" />拼写检查</button>
      <span className="ml-[5px]"><Caret /></span>
      <button className="ml-[5px] flex items-center gap-0.5 border-l border-[#dfe2e8] pl-1"><S n="check" />内容检查</button>
      <span className="ml-[5px]"><Caret /></span>
      <button className="ml-[25px] flex items-center gap-0.5"><S n="font" />缺失字体</button>
      <div className="ml-auto flex items-center pr-2">
        <button aria-label="护眼"><S n="eye" /></button>
        <span className="ml-3 h-4 w-px bg-[#dfe2e8]" />
        <button aria-label="页面视图" className="ml-[13px] flex h-5 w-[22px] items-center justify-center bg-[#dbe0e7]"><S n="page" /></button>
        <span className="ml-2 flex gap-2.5">
          {["list", "open", "globe", "pen"].map((n) => <button key={n} aria-label={n}><S n={n} /></button>)}
        </span>
        <span className="ml-3.5 h-4 w-px bg-[#dfe2e8]" />
        <button aria-label="适应" className="ml-3.5"><S n="fit" /></button>
        <span className="mr-1.5 ml-[7px]">90%</span>
        <Caret />
        <button aria-label="缩小" className="ml-3"><Svg s={10} sw={2}><path d="M0 5h10" /></Svg></button>
        <input type="range" aria-label="缩放" defaultValue={44} className="ml-3 h-3 w-[138px] appearance-none bg-[linear-gradient(to_right,#454f69_44%,#cdd1da_44%)] bg-size-[100%_1px] bg-center bg-no-repeat [&::-webkit-slider-thumb]:size-3 [&::-webkit-slider-thumb]:appearance-none [&::-webkit-slider-thumb]:rounded-full [&::-webkit-slider-thumb]:border [&::-webkit-slider-thumb]:border-[#454f69] [&::-webkit-slider-thumb]:bg-[#f4f4f4]" />
        <button aria-label="放大" className="ml-3"><Svg s={10} sw={2}><path d="M0 5h10M5 0v10" /></Svg></button>
        <button aria-label="全屏" className="ml-3"><S n="full" /></button>
      </div>
    </footer>
  );
}

function Watermark() {
  return (
    <div className="pointer-events-none absolute right-[11px] bottom-1.5 z-30 flex items-center gap-0.5 opacity-80">
      <svg width="42" height="42" viewBox="0 0 44 42" aria-hidden="true">
        <path d="M43 2C24-2 2 10 1 26c0 4 2 6 5 6C7 15 21 4 43 2z" fill="#3f9be0" />
        <path d="M6 32c-3-11 8-22 20-22 7 0 9 4 7 8-2-4-8-5-13-1-6 4-6 10-1 10 4 0 6-3 6-6-5 0-7 3-6 4-3-3 4-8 9-6 4 3-1 12-10 13-6 1-9-1-12 0z" fill="#3c86cf" />
        <path d="M42 15c1 14-15 26-38 26 12-3 24-11 26-21 3 1 7-1 12-5z" fill="#44b95c" />
        <path d="M22 33c-5 4-12 7-18 8 8 0 16-1 22-4z" fill="#e6e04a" />
      </svg>
      <div className="flex flex-col">
        <span className="text-[21px] leading-6 font-bold text-[#4a8fd6]">极光下载站</span>
        <span className="font-['Liberation_Sans',sans-serif] text-[16px] leading-[18px] font-bold text-[#55bf70]">www.xz7.com</span>
      </div>
    </div>
  );
}

export default function App() {
  return (
    <div className="relative flex h-screen flex-col overflow-hidden bg-[#f5f7fa] font-['Open_Sans','Noto_Sans_CJK_SC',sans-serif] text-[12px] leading-4 text-[#252b3a]">
      <TitleBar />
      <MenuBar />
      <Ribbon />
      <div className="flex min-h-0 flex-1">
        <LeftRail />
        <SectionPanel />
        <Workspace />
        <RightRail />
      </div>
      <StatusBar />
      <Watermark />
    </div>
  );
}
